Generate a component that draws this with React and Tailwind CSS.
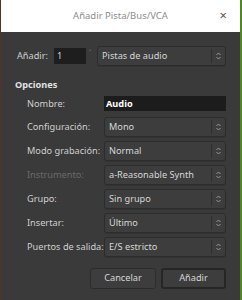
const rows = [
  { label: 'Configuración:', value: 'Mono' },
  { label: 'Modo grabación:', value: 'Normal' },
  { label: 'Instrumento:', value: 'a-Reasonable Synth', disabled: true },
  { label: 'Grupo:', value: 'Sin grupo' },
  { label: 'Insertar:', value: 'Último' },
  { label: 'Puertos de salida:', value: 'E/S estricto' },
];

function UpDown() {
  return (
    <svg width="5" height="8" viewBox="0 0 5 8" className="text-[#9a9a9a]">
      <path d="M0.5 3 L2.5 1 L4.5 3" fill="none" stroke="currentColor" strokeWidth="1" />
      <path d="M0.5 5 L2.5 7 L4.5 5" fill="none" stroke="currentColor" strokeWidth="1" />
    </svg>
  );
}

function Combo({ value, className = '' }) {
  return (
    <div
      className={`flex h-[20px] items-center rounded-[3px] border border-[#2c2c2c] bg-[#3d3d3d] shadow-[0_1px_0_#333] ${className}`}
    >
      <span className="flex-1 truncate pl-[4px] text-[#d6d6d6]">{value}</span>
      <span className="h-[14px] w-px bg-[#2e2e2e]" />
      <span className="flex w-[13px] justify-center">
        <UpDown />
      </span>
    </div>
  );
}

export default function App() {
  return (
    <div
      className="relative h-[300px] w-[242px] overflow-hidden bg-[#3a3a3a] text-[9.2px] text-[#cfcfcf]"
      style={{ fontFamily: '"Noto Sans", "Open Sans", sans-serif' }}
    >
      <div className="absolute left-0 top-0 h-full w-px bg-[#5a3028]" />
      <div className="absolute right-0 top-0 h-full w-[2px] bg-[#4c8a1c]" />

      <div className="relative ml-px mr-[2px] flex h-[32px] items-center justify-center bg-white">
        <span className="text-[9.5px] text-[#8c8c8c]">Añadir Pista/Bus/VCA</span>
        <span className="absolute right-[13px] top-[9px] text-[13px] leading-none text-[#555]">×</span>
      </div>

      <div className="ml-px mr-[2px] px-[14px] pt-[14px]">
        <div className="flex h-[20px] items-center">
          <span className="ml-[2px] w-[37px]">Añadir:</span>
          <div className="flex h-[16px] w-[32px] items-center bg-[#1e1e1e] pl-[3px] text-[#d6d6d6]">1</div>
          <span className="mb-[8px] ml-[3px] w-[8px] text-[7px] leading-none text-[#aaa]">˄</span>
          <Combo value="Pistas de audio" className="w-[129px]" />
        </div>

        <div className="mt-[12px] font-bold text-[#e2e2e2]">Opciones</div>

        <div className="mt-[3px] pl-[12px]">
          <div className="flex h-[18px] items-center">
            <span className="w-[77px]">Nombre:</span>
            <div className="flex h-[15px] w-[122px] items-center bg-[#1c1c1c] pl-[2px] font-bold text-white">
              Audio
            </div>
          </div>
          {rows.map((r) => (
            <div key={r.label} className="mt-[4px] flex h-[20px] items-center">
              <span className={`w-[77px] whitespace-nowrap ${r.disabled ? 'text-[#6a6a6a]' : ''}`}>{r.label}</span>
              <Combo value={r.value} className="w-[122px]" />
            </div>
          ))}
        </div>

        <div className="mt-[11px] flex justify-end gap-[5px]">
          <button className="h-[21px] w-[66px] rounded-[3px] border border-[#2c2c2c] bg-[#3d3d3d] text-[#d6d6d6]">
            Cancelar
          </button>
          <button className="h-[21px] w-[65px] rounded-[3px] border-2 border-[#262626] bg-[#3d3d3d] text-[#d6d6d6]">
            Añadir
          </button>
        </div>
      </div>
    </div>
  );
}
